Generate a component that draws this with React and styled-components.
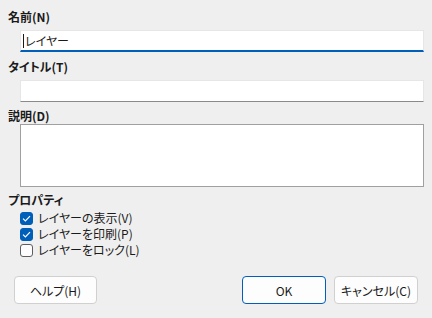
import React, { useState } from "react";
import styled, { createGlobalStyle } from "styled-components";

const Global = createGlobalStyle`
  html, body {
    margin: 0;
    padding: 0;
    background: #efefef;
  }
  body {
    font-family: "Noto Sans CJK JP", "Noto Sans", sans-serif;
    font-size: 12px;
    font-feature-settings: "palt";
    color: #1a1a1a;
  }
`;

const Dialog = styled.div`
  width: 432px;
  height: 318px;
  display: flex;
  flex-direction: column;
  box-sizing: border-box;
  padding: 0 8px;
`;

const Label = styled.div`
  font-weight: bold;
  line-height: 16px;
  height: 16px;
  margin-top: ${(p) => p.$top}px;
  white-space: nowrap;
`;

const Field = styled.div`
  margin-left: 12px;
  margin-top: ${(p) => p.$top || 0}px;
  height: 22px;
  box-sizing: border-box;
  background: #fff;
  border: 1px solid #e6e6e6;
  border-bottom: ${(p) => (p.$focused ? "2px solid #005fb8" : "1px solid #8a8a8a")};
  display: flex;
  align-items: center;
  padding-left: 2px;
  font-size: 12px;
  line-height: 16px;
`;

const Caret = styled.span`
  width: 1px;
  height: 14px;
  background: #1a1a1a;
  margin-right: 1px;
`;

const Area = styled.div`
  margin-left: 12px;
  height: 63px;
  box-sizing: border-box;
  background: #fff;
  border: 1px solid #a0a0a0;
`;

const Checks = styled.div`
  margin-top: 2px;
  margin-left: 12px;
  display: flex;
  flex-direction: column;
`;

const CheckRow = styled.label`
  display: flex;
  align-items: center;
  height: 16px;
  gap: 5px;
  line-height: 16px;
  cursor: default;
`;

const Box = styled.span`
  width: 13px;
  height: 13px;
  box-sizing: border-box;
  border-radius: 3px;
  display: flex;
  align-items: center;
  justify-content: center;
  background: ${(p) => (p.$on ? "#005fb8" : "#fdfdfd")};
  border: 1px solid ${(p) => (p.$on ? "#005fb8" : "#5e5e5e")};
`;

const Footer = styled.div`
  margin-top: 18px;
  display: flex;
  padding: 0 6px;
  gap: 8px;
`;

const Button = styled.button`
  width: ${(p) => p.$w || 84}px;
  height: 28px;
  box-sizing: border-box;
  border-radius: 4px;
  background: #fdfdfd;
  border: 1px solid ${(p) => (p.$primary ? "#005fb8" : "#d0d0d0")};
  font-family: inherit;
  font-feature-settings: "palt";
  font-size: 12px;
  color: #1a1a1a;
  padding: 0;
  margin-left: ${(p) => (p.$push ? "auto" : "0")};
`;

const Check = () => (
  <svg width="9" height="7" viewBox="0 0 9 7">
    <path d="M1 3.6 L3.4 6 L8 1.2" fill="none" stroke="#fff" strokeWidth="1.2" />
  </svg>
);

export default function App() {
  const [opts, setOpts] = useState([
    { label: "レイヤーの表示(V)", on: true },
    { label: "レイヤーを印刷(P)", on: true },
    { label: "レイヤーをロック(L)", on: false },
  ]);

  const toggle = (i) => {
    setOpts(opts.map((o, j) => (j === i ? { ...o, on: !o.on } : o)));
  };

  return (
    <>
      <Global />
      <Dialog>
        <Label $top={9}>名前(N)</Label>
        <Field $top={5} $focused>
          <Caret />
          レイヤー
        </Field>
        <Label $top={7}>タイトル(T)</Label>
        <Field $top={5} />
        <Label $top={6}>説明(D)</Label>
        <Area />
        <Label $top={5}>プロパティ</Label>
        <Checks>
          {opts.map((o, i) => (
            <CheckRow key={o.label} onClick={() => toggle(i)}>
              <Box $on={o.on}>{o.on && <Check />}</Box>
              {o.label}
            </CheckRow>
          ))}
        </Checks>
        <Footer>
          <Button $w={83}>ヘルプ(H)</Button>
          <Button $primary $push>OK</Button>
          <Button>キャンセル(C)</Button>
        </Footer>
      </Dialog>
    </>
  );
}
